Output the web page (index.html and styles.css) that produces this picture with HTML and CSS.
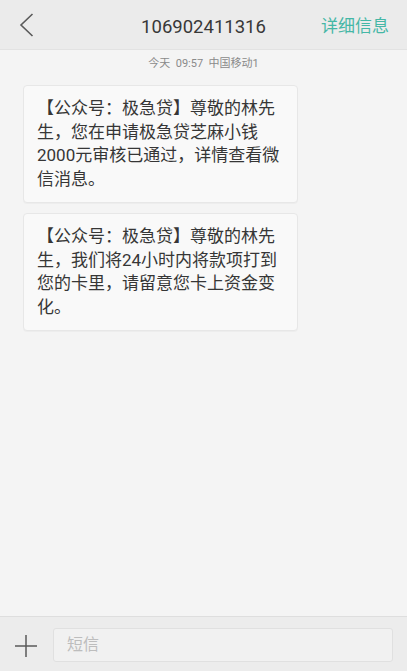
FILE: index.html
```html
<!DOCTYPE html>
<html lang="zh-CN">
<head>
    <meta charset="UTF-8">
    <meta name="viewport" content="width=device-width, initial-scale=1.0">
    <title>106902411316</title>
    <link rel="stylesheet" href="styles.css">
</head>
<body>
    <div class="top-bar">
        <div class="back">
            <svg width="16" height="26" viewBox="0 0 16 26">
                <polyline points="13.5,2 2,13 13.5,24" fill="none" stroke="#5a5a5a" stroke-width="1.6"/>
            </svg>
        </div>
        <div class="title">106902411316</div>
        <div class="detail">详细信息</div>
    </div>

    <div class="thread">
        <div class="stamp">今天&nbsp; 09:57&nbsp; 中国移动1</div>
        <div class="bubble">【公众号：极急贷】尊敬的林先生，您在申请极急贷芝麻小钱2000元审核已通过，详情查看微信消息。</div>
        <div class="bubble">【公众号：极急贷】尊敬的林先生，我们将24小时内将款项打到您的卡里，请留意您卡上资金变化。</div>
    </div>

    <div class="compose">
        <div class="plus">
            <svg width="24" height="24" viewBox="0 0 24 24">
                <line x1="1" y1="12" x2="23" y2="12" stroke="#5a5a5a" stroke-width="1.5"/>
                <line x1="12" y1="1" x2="12" y2="23" stroke="#5a5a5a" stroke-width="1.5"/>
            </svg>
        </div>
        <div class="input">短信</div>
    </div>
</body>
</html>
```

FILE: styles.css
```css
body {
    margin: 0;
    height: 100vh;
    display: flex;
    flex-direction: column;
    background: #f4f4f4;
    color: #363636;
    font-family: Roboto, "Noto Sans CJK SC", sans-serif;
}
.top-bar {
    height: 50px;
    flex-shrink: 0;
    background: #ebebeb;
    border-bottom: 1px solid #e2e2e2;
    box-sizing: border-box;
    display: grid;
    grid-template-columns: 1fr auto 1fr;
    align-items: center;
}
.back {
    padding-left: 19px;
    display: flex;
    align-items: center;
    padding-top: 1px;
}
.title {
    font-size: 18.5px;
    color: #383838;
    padding-top: 4px;
}
.detail {
    justify-self: end;
    padding-right: 18px;
    font-size: 17px;
    color: #45b7a6;
}
.thread {
    flex: 1;
    padding: 0 0 0 23px;
}
.stamp {
    text-align: center;
    font-size: 11px;
    color: #8a8a8a;
    margin: 6px 0 13px -23px;
    line-height: 16px;
}
.bubble {
    width: 250px;
    padding: 11px 10px 11px 13px;
    margin-bottom: 10px;
    background: #f9f9f9;
    border: 1px solid #e7e7e7;
    border-radius: 4px;
    box-shadow: 0 1px 1px rgba(0, 0, 0, 0.03);
    font-size: 17px;
    line-height: 23.5px;
    color: #363636;
}
.compose {
    height: 55px;
    flex-shrink: 0;
    box-sizing: border-box;
    background: #ececec;
    border-top: 1px solid #dedede;
    display: flex;
    align-items: flex-start;
    padding: 11px 14px 0 14px;
}
.plus {
    width: 24px;
    height: 34px;
    display: flex;
    align-items: center;
    margin-right: 15px;
    padding-top: 1px;
}
.input {
    flex: 1;
    height: 34px;
    box-sizing: border-box;
    background: #f1f1f1;
    border: 1px solid #e0e0e0;
    border-radius: 3px;
    padding-left: 13px;
    font-size: 16px;
    line-height: 32px;
    color: #bdbdbd;
}
```
